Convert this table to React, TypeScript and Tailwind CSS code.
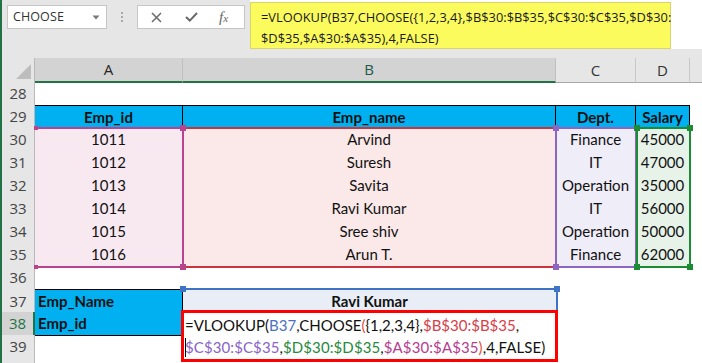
import React from "react";

type Emp = { id: number; name: string; dept: string; salary: number };

const employees: Emp[] = [
  { id: 1011, name: "Arvind", dept: "Finance", salary: 45000 },
  { id: 1012, name: "Suresh", dept: "IT", salary: 47000 },
  { id: 1013, name: "Savita", dept: "Operation", salary: 35000 },
  { id: 1014, name: "Ravi Kumar", dept: "IT", salary: 56000 },
  { id: 1015, name: "Sree shiv", dept: "Operation", salary: 50000 },
  { id: 1016, name: "Arun T.", dept: "Finance", salary: 62000 },
];

const ROW = "grid grid-cols-[33px_148px_373px_80px_54px_1fr] h-[23px]";

function RowHead({ n, active = false }: { n?: number; active?: boolean }) {
  return active ? (
    <div className="flex items-center justify-center bg-[#d3d3d3] border-r-2 border-r-[#217346] border-b border-b-[#c9c9c9] text-[#217346] text-[15px] font-['Open_Sans',sans-serif]">
      {n}
    </div>
  ) : (
    <div className="flex items-center justify-center bg-[#e6e6e6] border-r border-r-[#b9b9b9] border-b border-b-[#d0d0d0] text-[#444] text-[15px] font-['Open_Sans',sans-serif]">
      {n}
    </div>
  );
}

function Handle({ x, y, c, s = 6 }: { x: number; y: number; c: string; s?: number }) {
  return (
    <div
      className="absolute"
      style={{ left: x - s / 2, top: y - s / 2, width: s, height: s, background: c }}
    />
  );
}

export default function App() {
  return (
    <div className="relative flex w-[702px] h-[363px] overflow-hidden bg-white font-['Lato','Liberation_Sans',sans-serif] text-[15px] text-[#111]">
      {/* window edge */}
      <div className="w-[2px] shrink-0 bg-[#217346]" />

      <div className="flex-1 min-w-0">
        {/* name box + formula bar */}
        <div className="h-[58px] bg-[#e6e6e6] flex items-start font-['Open_Sans',sans-serif]">
          <div className="ml-[5px] mt-[5px] w-[100px] h-[24px] bg-white border border-[#c6c6c6] flex items-center justify-between pl-[5px] pr-[6px]">
            <span className="text-[12.5px] text-[#333] tracking-[0.1px]">CHOOSE</span>
            <svg width="8" height="5" viewBox="0 0 8 5">
              <path d="M0.5 0.5 L7.5 0.5 L4 4.5 Z" fill="#7a7a7a" />
            </svg>
          </div>
          <div className="ml-[14px] mt-[12px] flex flex-col gap-[2px]">
            <div className="w-[2px] h-[2px] bg-[#a9a9a9]" />
            <div className="w-[2px] h-[2px] bg-[#a9a9a9]" />
            <div className="w-[2px] h-[2px] bg-[#a9a9a9]" />
          </div>
          <div className="ml-[14px] mt-[5px] w-[108px] h-[24px] bg-white border border-[#c6c6c6] flex items-center">
            <svg className="ml-[13px]" width="11" height="11" viewBox="0 0 11 11">
              <path d="M1 1 L10 10 M10 1 L1 10" stroke="#6a6a6a" strokeWidth="1.5" />
            </svg>
            <svg className="ml-[23px]" width="13" height="10" viewBox="0 0 13 10">
              <path d="M1 5 L4.8 8.6 L12 1" stroke="#6a6a6a" strokeWidth="2" fill="none" />
            </svg>
            <span className="ml-[21px] font-['Liberation_Serif',serif] italic text-[#666] text-[15px] leading-none">
              f<span className="text-[11px]">x</span>
            </span>
          </div>
          <div className="ml-[5px] flex-1 h-[49px] bg-white">
            <div className="mt-[2px] w-[421px] h-[47px] bg-[#fbfb5e] border border-[#d6d66c] pl-[10px] pt-[4px] text-[12.85px] leading-[21px] text-[#1a1a1a] whitespace-nowrap">
              <div>=VLOOKUP(B37,CHOOSE({"{"}1,2,3,4{"}"},$B$30:$B$35,$C$30:$C$35,$D$30:</div>
              <div>$D$35,$A$30:$A$35),4,FALSE)</div>
            </div>
          </div>
        </div>

        {/* column headers */}
        <div className="grid grid-cols-[33px_148px_373px_80px_54px_1fr] h-[24px] font-['Open_Sans',sans-serif] text-[15px]">
          <div className="bg-[#e6e6e6] border-r border-r-[#b9b9b9] border-b border-b-[#a8a8a8] flex items-end justify-end pr-[2px] pb-[2px]">
            <svg width="16" height="16" viewBox="0 0 16 16">
              <path d="M0 15 L15 15 L15 0 Z" fill="#bdbdbd" />
            </svg>
          </div>
          <div className="bg-[#d3d3d3] border-r border-r-[#c0c0c0] border-b-2 border-b-[#217346] flex items-center justify-center text-[#262626]">
            A
          </div>
          <div className="bg-[#d3d3d3] border-r border-r-[#c0c0c0] border-b-2 border-b-[#217346] flex items-center justify-center text-[#1e5a4a]">
            B
          </div>
          <div className="bg-[#e6e6e6] border-r border-r-[#c8c8c8] border-b border-b-[#a8a8a8] flex items-center justify-center text-[#333]">
            C
          </div>
          <div className="bg-[#e6e6e6] border-r border-r-[#c8c8c8] border-b border-b-[#a8a8a8] flex items-center justify-center text-[#333]">
            D
          </div>
          <div className="bg-[#e6e6e6] border-b border-b-[#a8a8a8]" />
        </div>

        {/* row 28 */}
        <div className={ROW}>
          <RowHead n={28} />
          <div className="col-span-5" />
        </div>

        {/* row 29: table header */}
        <div className={ROW}>
          <RowHead n={29} />
          {["Emp_id", "Emp_name", "Dept.", "Salary"].map((h) => (
            <div
              key={h}
              className="bg-[#00b0f0] border-t border-r border-black flex items-center justify-center font-bold"
            >
              {h}
            </div>
          ))}
          <div />
        </div>

        {/* rows 30-35: data */}
        {employees.map((e, i) => (
          <div key={e.id} className={ROW}>
            <RowHead n={30 + i} />
            <div className="bg-[#f8e9f1] border-r border-b border-black flex items-center justify-center">
              {e.id}
            </div>
            <div className="bg-[#fbe8e8] border-r border-b border-black flex items-center justify-center">
              {e.name}
            </div>
            <div className="bg-[#efedf8] border-r border-b border-black flex items-center justify-center">
              {e.dept}
            </div>
            <div className="bg-[#e7f3e8] border-r border-b border-black flex items-center justify-center">
              {e.salary}
            </div>
            <div />
          </div>
        ))}

        {/* row 36 */}
        <div className={ROW}>
          <RowHead n={36} />
          <div className="col-span-5" />
        </div>

        {/* row 37 */}
        <div className={ROW}>
          <RowHead n={37} />
          <div className="bg-[#00b0f0] border-t border-r border-b border-black flex items-center pl-[3px] font-bold">
            Emp_Name
          </div>
          <div className="bg-[#e8edf6] border-b border-[#c8cfdc] flex items-center justify-center font-bold">
            Ravi Kumar
          </div>
          <div className="col-span-3" />
        </div>

        {/* row 38 */}
        <div className={ROW}>
          <RowHead n={38} active />
          <div className="bg-[#00b0f0] border-r border-b border-black flex items-center pl-[3px] font-bold">
            Emp_id
          </div>
          <div className="col-span-4" />
        </div>

        {/* row 39 */}
        <div className={ROW}>
          <RowHead n={39} />
          <div className="col-span-5" />
        </div>

        {/* next row, scrolled just past the bottom edge */}
        <div className={ROW}>
          <RowHead />
          <div className="col-span-5" />
        </div>
      </div>

      {/* reference range highlights while editing */}
      <div className="absolute inset-0 pointer-events-none">
        {/* $A$30:$A$35 */}
        <div className="absolute left-[35px] top-[127px] w-[149px] h-[141px] border-t-2 border-b-2 border-r-2 border-[#b8438f]" />
        {/* $B$30:$B$35 */}
        <div className="absolute left-[184px] top-[127px] w-[372px] h-[141px] border-t-2 border-b-2 border-[#c9353f]" />
        {/* $C$30:$C$35 */}
        <div className="absolute left-[555px] top-[127px] w-[82px] h-[141px] border-2 border-[#8d66c4]" />
        {/* $D$30:$D$35 */}
        <div className="absolute left-[636px] top-[127px] w-[55px] h-[141px] border-2 border-[#1d8a34]" />
        {/* B37 */}
        <div className="absolute left-[183px] top-[288px] w-[375px] h-[24px] border-t-2 border-r-2 border-[#3f73c6]" />

        <Handle x={36} y={128} c="#b8438f" s={4} />
        <Handle x={183} y={128} c="#b8438f" />
        <Handle x={36} y={267} c="#b8438f" s={4} />
        <Handle x={183} y={267} c="#b8438f" />
        <Handle x={556} y={128} c="#8d66c4" />
        <Handle x={556} y={267} c="#8d66c4" />
        <Handle x={637} y={128} c="#1d8a34" />
        <Handle x={690} y={128} c="#1d8a34" />
        <Handle x={637} y={267} c="#1d8a34" />
        <Handle x={690} y={267} c="#1d8a34" />
        <Handle x={183} y={289} c="#3f73c6" />
        <Handle x={557} y={289} c="#3f73c6" />

        {/* in-cell editor for B38 */}
        <div className="absolute left-[181px] top-[310px] w-[377px] h-[52px] bg-white border-[3px] border-[#ff0000] pl-[1px] pt-[1px] leading-[22px] whitespace-nowrap text-[#111]">
          <div>
            =VLOOKUP(<span className="text-[#4a72c4]">B37</span>,CHOOSE
            <span className="text-[#e0533a]">(</span>
            {"{"}1,2,3,4{"}"},<span className="text-[#d6404a]">$B$30:$B$35</span>,
          </div>
          <div className="relative tracking-[0.1px]">
            <span className="absolute left-0 top-[2px] w-[1px] h-[19px] bg-black" />
            <span className="text-[#8a64c8]">$C$30:$C$35</span>,
            <span className="text-[#27893c]">$D$30:$D$35</span>,
            <span className="text-[#b53c8f]">$A$30:$A$35</span>
            <span className="text-[#e0533a]">)</span>,4,FALSE)
          </div>
        </div>
      </div>
    </div>
  );
}
